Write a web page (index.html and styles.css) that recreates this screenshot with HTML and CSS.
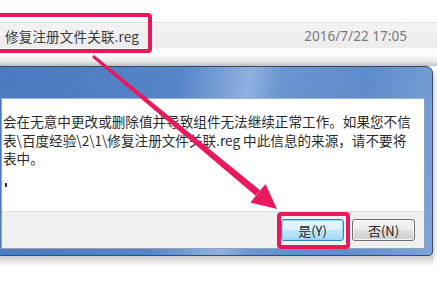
FILE: index.html
```html
<!DOCTYPE html>
<html lang="zh-CN">
<head>
<meta charset="utf-8">
<link rel="stylesheet" href="styles.css">
</head>
<body>
<div class="page">
  <div class="top"></div>
  <div class="filerow">
    <span class="fname">修复注册文件关联.reg</span>
    <span class="fdate">2016/7/22 17:05</span>
  </div>
  <div class="gap"></div>
  <div class="dialog">
    <div class="titlebar"></div>
    <div class="panel">
      <div class="content">
        <div class="line l1">会在无意中更改或删除值并导致组件无法继续正常工作。如果您不信</div>
        <div class="line l2">表\百度经验\2\1\修复注册文件关联.reg 中此信息的来源，请不要将</div>
        <div class="line l3">表中。</div>
        <div class="tick"></div>
      </div>
      <div class="buttons">
        <button class="btn btn-yes">是(Y)</button>
        <button class="btn">否(N)</button>
      </div>
    </div>
  </div>
  <div class="shadow"></div>

  <div class="mark mark-file"></div>
  <div class="mark mark-yes"></div>
  <svg class="arrow" width="437" height="282" viewBox="0 0 437 282">
    <polygon points="92.0,57.2 94.0,54.9 260.0,190.3 255.6,195.7" fill="#e8195d"/>
    <polygon points="250.3,202.5 265.5,184.0 277,209" fill="#e8195d"/>
  </svg>
</div>
</body>
</html>
```
FILE: styles.css
```css
* { box-sizing: border-box; }
html, body { margin: 0; padding: 0; background: #fff; }
body { width: 437px; height: 282px; overflow: hidden; font-family: "Noto Sans", "Noto Sans CJK SC", sans-serif; }
.page { position: relative; width: 437px; height: 282px; overflow: hidden; }

.top { height: 22px; background: #fff; }
.filerow {
  height: 26px;
  display: flex;
  align-items: center;
  justify-content: space-between;
  padding: 0 30px 0 5px;
  background: linear-gradient(#f3f3f3, #ececec);
  border-top: 1px solid #e2e2e2;
}
.fname { font-family: "Noto Sans CJK SC", sans-serif; font-size: 13.5px; color: #3a3a3a; letter-spacing: 0.2px; }
.fdate { font-family: "Noto Sans", "Noto Sans CJK SC", sans-serif; font-size: 13.6px; color: #7a7a7a; }

.gap { height: 18px; background: linear-gradient(#fafafa 0, #fdfdfd 35%, #ececec 70%, #c8c8c8 100%); }

.dialog {
  margin: 0 4px 0 -10px;
  height: 190px;
  display: flex;
  flex-direction: column;
  border: 1px solid #3b4d66;
  border-radius: 0 7px 4px 0;
  background: linear-gradient(100deg, #4a79bf 0%, #5584c8 40%, #8fb1de 55%, #6a94cf 62%, #5f8ccb 80%, #7ea3d8 100%);
  box-shadow: 0 3px 6px rgba(0,0,0,0.35);
}
.titlebar { height: 31px; flex: none; }
.panel {
  margin: 0 7px 6px 10px;
  flex: 1;
  display: flex;
  flex-direction: column;
  border: 1px solid #8aa4c8;
  border-top-color: #9db6d8;
}
.content {
  height: 113px;
  background: #fff;
  padding-top: 13px;
  font-family: "Noto Sans CJK SC", sans-serif;
  font-size: 13.6px;
  color: #2a2a2a;
  border-bottom: 1px solid #dfdfdf;
}
.line { line-height: 18.5px; white-space: nowrap; padding-left: 1px; }
.tick { width: 2px; height: 4px; background: #333; margin: 15px 0 0 3px; }
.buttons {
  flex: 1;
  background: #f0f0f0;
  display: flex;
  justify-content: flex-end;
  align-items: flex-start;
  gap: 8px;
  padding: 7px 9px 0 0;
}
.btn {
  width: 63px;
  height: 22px;
  padding: 0;
  font-family: "Noto Sans CJK SC", sans-serif;
  font-size: 13px;
  color: #222;
  border: 1px solid #707070;
  border-radius: 3px;
  background: linear-gradient(#f4f4f4 0, #ebebeb 50%, #dddddd 51%, #cfcfcf 100%);
  box-shadow: inset 0 0 0 1px rgba(255,255,255,0.8);
}
.btn-yes {
  border-color: #3c7fb1;
  background: linear-gradient(#eaf6fd 0, #d9f0fc 50%, #bee6fd 51%, #a7d9f5 100%);
  box-shadow: inset 0 0 0 1px #8ed6ff;
}

.shadow { height: 10px; background: linear-gradient(#c8c8c8, #fff); margin-right: 4px; }

.mark { position: absolute; border: 4px solid #e6195b; border-radius: 4px; }
.mark-file { left: -6px; top: 13px; width: 158px; height: 40px; }
.mark-yes { left: 277px; top: 212px; width: 73px; height: 37px; }
.arrow { position: absolute; left: 0; top: 0; }
```
